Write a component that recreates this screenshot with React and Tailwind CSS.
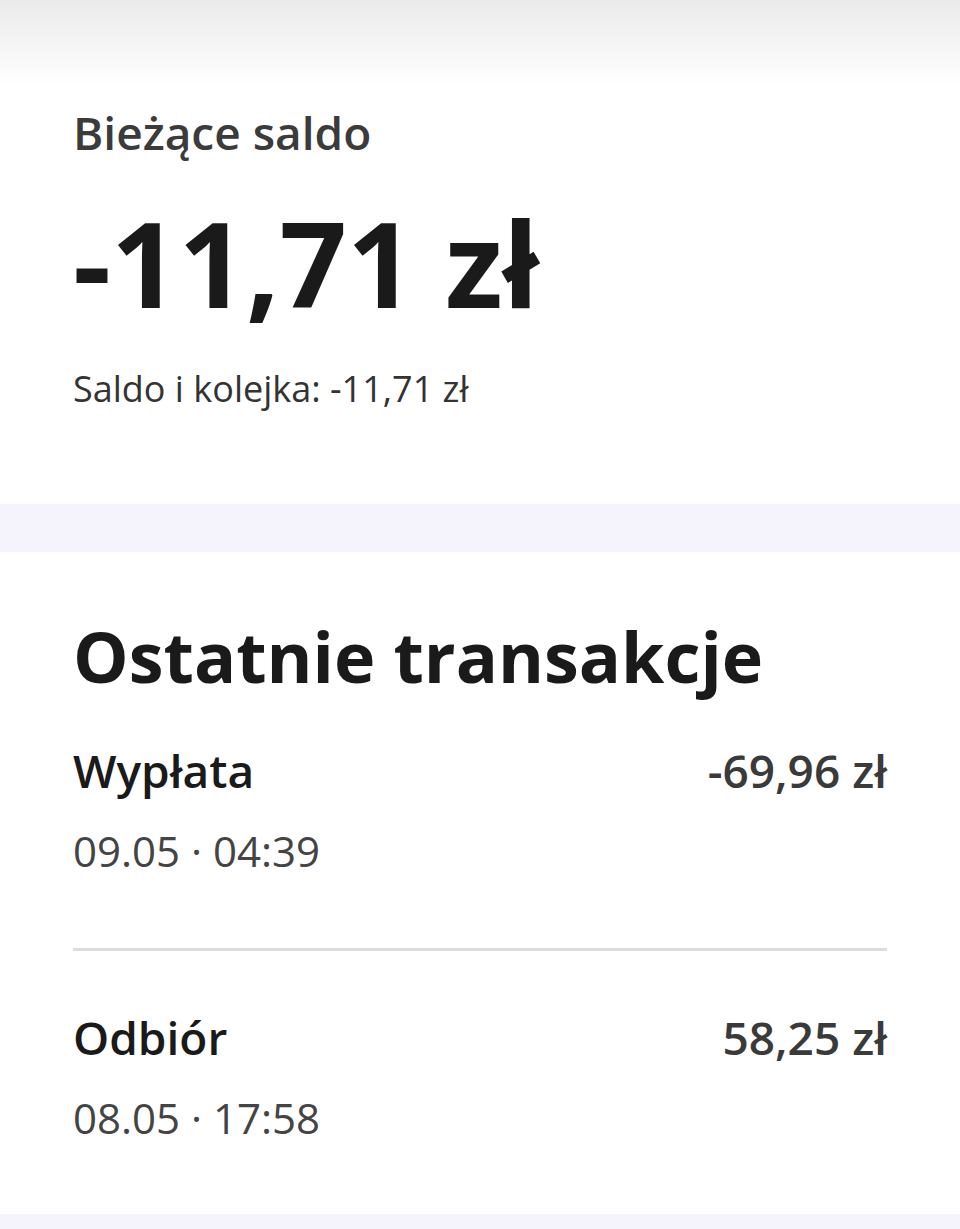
const font = { fontFamily: '"Open Sans", "Noto Sans", sans-serif' };

const transactions = [
  { title: 'Wypłata', amount: '-69,96 zł', date: '09.05 · 04:39' },
  { title: 'Odbiór', amount: '58,25 zł', date: '08.05 · 17:58' },
];

function Transaction({ t, last }) {
  return (
    <div className={last ? 'pt-[56px] pb-[68px]' : 'pt-[44px] pb-[69px] border-b-[3px] border-[#dcdcdc]'}>
      <div className="flex justify-between items-baseline">
        <span className="text-[46px] leading-[60px] font-semibold text-[#1a1a1a]">{t.title}</span>
        <span className="text-[46px] leading-[60px] font-semibold text-[#3a3a3a]">{t.amount}</span>
      </div>
      <div className="mt-[23px] text-[42px] leading-[56px] text-[#444]">{t.date}</div>
    </div>
  );
}

export default function App() {
  return (
    <div className="min-h-screen bg-white" style={font}>
      <div className="h-[85px] bg-gradient-to-b from-[#eaeaea] to-white" />
      <section className="px-[73px] pt-[17px] pb-[91px]">
        <h2 className="text-[46px] leading-[60px] font-semibold text-[#3b3b3b]">Bieżące saldo</h2>
        <div className="mt-[41px] text-[118px] leading-[120px] font-bold text-[#1a1a1a]">-11,71 zł</div>
        <p className="mt-[42px] text-[36px] leading-[48px] text-[#333]">Saldo i kolejka: -11,71 zł</p>
      </section>
      <div className="h-[48px] bg-[#f5f3fc]" />
      <section className="px-[73px] pt-[64px]">
        <h1 className="text-[70px] leading-[80px] font-bold text-[#1a1a1a]">Ostatnie transakcje</h1>
        {transactions.map((t, i) => (
          <Transaction key={t.title} t={t} last={i === transactions.length - 1} />
        ))}
      </section>
      <div className="h-[17px] bg-[#f5f3fc]" />
    </div>
  );
}
